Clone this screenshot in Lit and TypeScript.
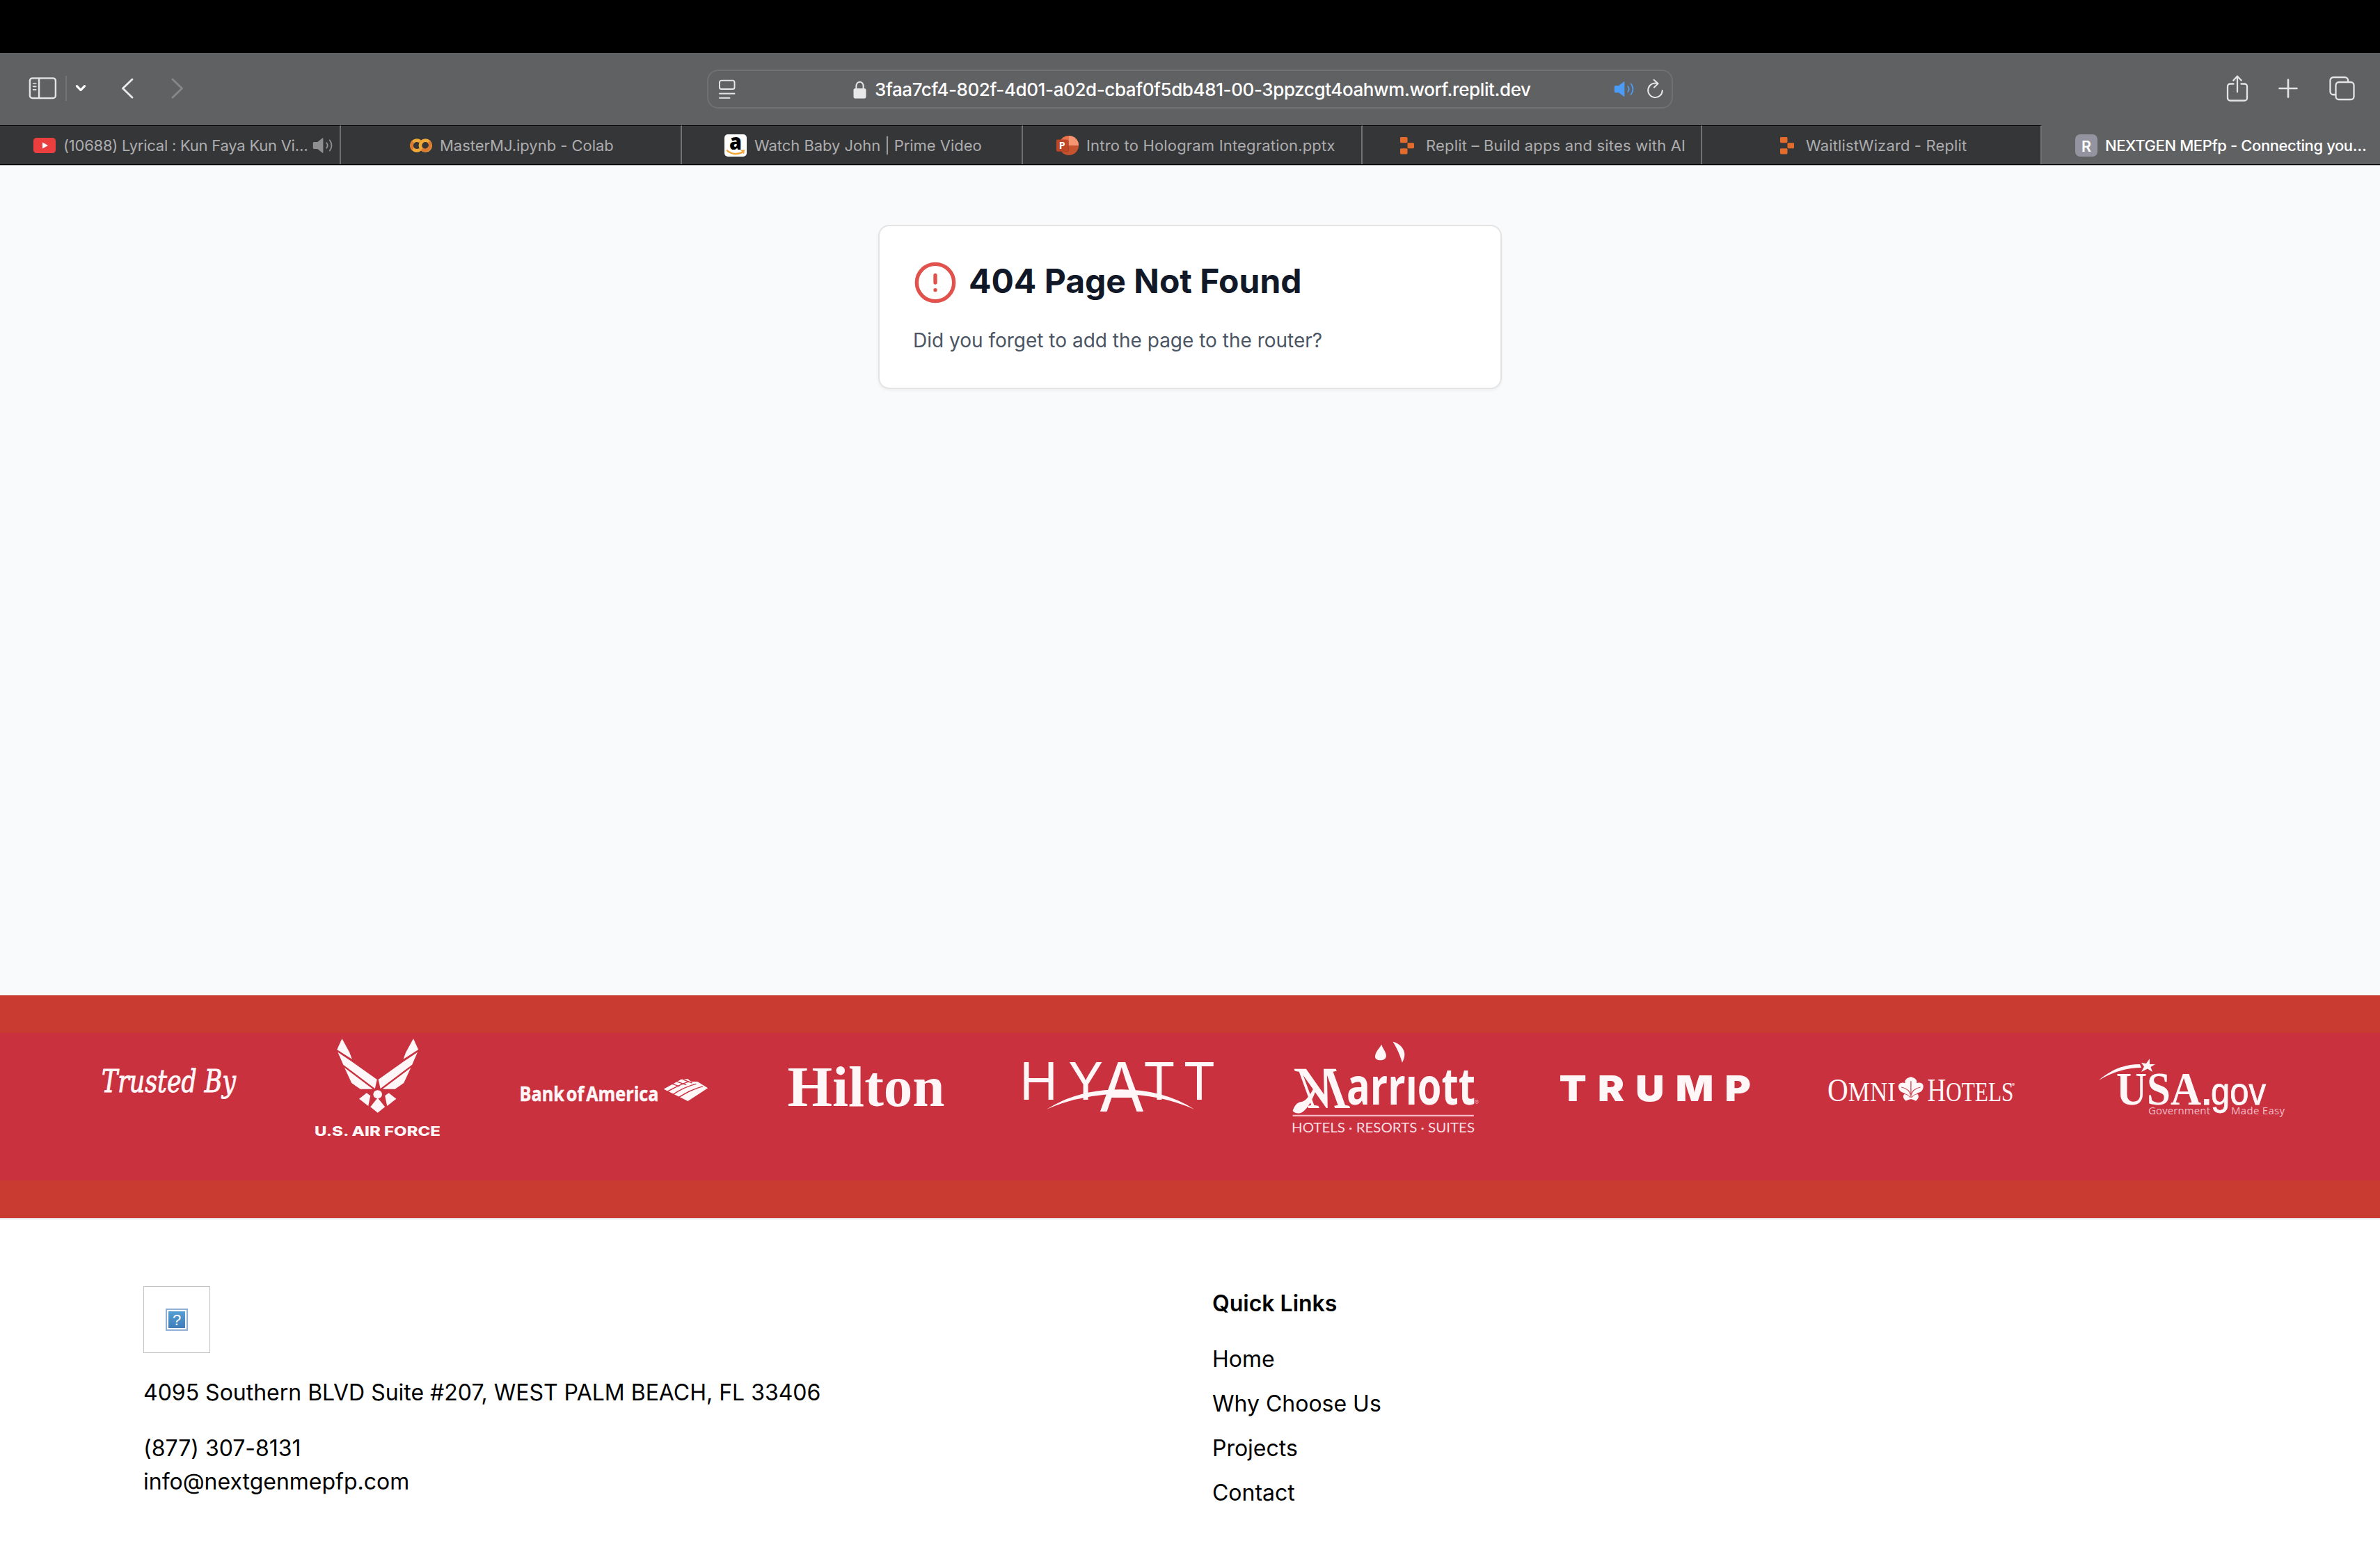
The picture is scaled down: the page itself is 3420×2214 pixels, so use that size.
import { LitElement, html, svg, css } from "lit";
import { customElement } from "lit/decorators.js";

const LOGO_FILL = "#fff6f8";

const sidebarIcon = html`<svg width="40" height="32" viewBox="0 0 40 32" fill="none" stroke="#e4e4e5" stroke-width="2.4">
  <rect x="1.9" y="1.4" width="37" height="28.6" rx="3.6" /><path d="M15.1 1.4v28.6" />
  <path d="M6.700 9h4M6.700 13.300h4M6.700 17.800h4" stroke-width="1.7" stroke-linecap="round" /></svg>`;
const speaker = (c: string) => html`<svg width="30" height="24" viewBox="0 0 30 24" fill="none" stroke=${c} stroke-width="1.9" stroke-linecap="round">
  <path d="M2.6 7h4.6l7-5.4c.6-.5 1.2-.2 1.2.5v19.8c0 .7-.6 1-1.2.5l-7-5.4H2.6C1.4 17 .8 16.4.8 15.200V8.800C.8 7.600 1.400 7 2.600 7Z" fill=${c} stroke="none" />
  <path d="M20.300 8.200a6.500 6.500 0 0 1 0 7.600M24.800 4.500a12 12 0 0 1 0 15" /></svg>`;

const icons: Record<string, unknown> = {
  youtube: html`<svg width="32" height="32" viewBox="0 0 32 32"><rect y="5" width="32" height="22" rx="4.500" fill="#ea3f3e" /><path d="M13 11.500v9l8-4.500Z" fill="#fff" /></svg>`,
  colab: html`<svg width="32" height="32" viewBox="0 0 32 32" fill="none" stroke-width="4.700">
    <path d="M14.600 10.300A7.400 7.400 0 1 0 14.600 21.700" stroke="#f0a938" />
    <path d="M4.600 10.800A7.400 7.400 0 0 0 4.600 21.200" stroke="#dc7a31" />
    <circle cx="22.300" cy="16" r="7.400" stroke="#f0a938" />
    <path d="M27.500 10.800A7.400 7.400 0 0 1 17.100 21.200" stroke="#dc7a31" /></svg>`,
  amazon: html`<svg width="32" height="32" viewBox="0 0 32 32"><rect width="32" height="32" rx="5" fill="#fff" />
    <text x="16" y="21.500" text-anchor="middle" font-family="Open Sans, sans-serif" font-weight="800" font-size="32" textLength="18" lengthAdjust="spacingAndGlyphs">a</text>
    <path d="M4 23.300c6.500 5.600 16 6.200 22.500 1.700" fill="none" stroke="#f3a63b" stroke-width="2.400" stroke-linecap="round" />
    <path d="M23.500 23.300l4.800-.3-.9 4.600" fill="none" stroke="#f3a63b" stroke-width="1.600" /></svg>`,
  powerpoint: html`<svg width="32" height="32" viewBox="0 0 32 32"><circle cx="18" cy="16" r="14" fill="#c6532f" />
    <path d="M4 16A14 14 0 0 1 18 2v14Z" fill="#e8744f" /><path d="M18 2a14 14 0 0 1 14 14H18Z" fill="#f59571" />
    <rect x="1" y="8.500" width="17" height="17" rx="1.500" fill="#8f351c" opacity=".45" />
    <rect y="7.500" width="16.500" height="17" rx="1.500" fill="#bd4727" />
    <text x="8.200" y="20.700" text-anchor="middle" fill="#fff" font-family="Open Sans, sans-serif" font-weight="700" font-size="14">P</text></svg>`,
  replit: html`<svg width="32" height="32" viewBox="0 0 32 32" fill="#e36c2d"><rect x="6" y="4" width="10.500" height="8.200" rx="1.400" />
    <rect x="16.500" y="12.200" width="9.500" height="8" rx="1.400" /><rect x="6" y="20.200" width="10.500" height="8.200" rx="1.400" /></svg>`,
  letter: html`<svg width="32" height="32" viewBox="0 0 32 32"><rect width="32" height="32" rx="7" fill="#9494a0" />
    <text x="16" y="24.500" text-anchor="middle" fill="#fff" font-family="Inter, sans-serif" font-weight="600" font-size="21.500">R</text></svg>`,
};

interface Tab { icon: string; label: string; inset: number; width: number; spacing: number; audio?: boolean; active?: boolean }
const tabs: Tab[] = [
  { icon: "youtube", label: "(10688) Lyrical : Kun Faya Kun Vi…", inset: 48, width: 490, spacing: -0.24, audio: true },
  { icon: "colab", label: "MasterMJ.ipynb - Colab", inset: 99, width: 490, spacing: -0.03 },
  { icon: "amazon", label: "Watch Baby John | Prime Video", inset: 61, width: 490, spacing: -0.04 },
  { icon: "powerpoint", label: "Intro to Hologram Integration.pptx", inset: 48, width: 488, spacing: 0.18 },
  { icon: "replit", label: "Replit – Build apps and sites with AI", inset: 48, width: 488, spacing: 0.18 },
  { icon: "replit", label: "WaitlistWizard - Replit", inset: 106, width: 488, spacing: 0.14 },
  { icon: "letter", label: "NEXTGEN MEPfp - Connecting you…", inset: 48, width: 486, spacing: -0.4, active: true },
];

const feathers = svg`
  <path d="M653 217 641 264 677 305 671 276Z" />
  <path d="M643 275 680 320 737 393 736 400 732 432 656 329Z" />
  <path d="M659 342 727 434H697L676 408Z" />
  <path d="M712 451 694 476 716 507 721 463Z" />`;

const logos = [
  { x: 0, w: 400, art: svg`<text x="146" y="1568.500" font-family="DejaVu Serif Condensed, DejaVu Serif, serif" font-style="italic" font-size="44" stroke=${LOGO_FILL} stroke-width=".9" textLength="193" lengthAdjust="spacingAndGlyphs">Trusted By</text>` },
  { x: 400, w: 300, art: svg`<g transform="translate(100 1420) scale(.59949 .33333)">${feathers}<g transform="translate(1477 0) scale(-1 1)">${feathers}</g>
      <ellipse cx="738.500" cy="457" rx="10.500" ry="18" /><path d="M738.500 472 721 511 738.500 536 756 511Z" /></g>
      <text x="452" y="1631.500" font-family="Inter, sans-serif" font-weight="800" font-size="18.500" textLength="181" lengthAdjust="spacingAndGlyphs">U.S. AIR FORCE</text>` },
  { x: 700, w: 380, art: svg`<text x="746.500" y="1582.300" font-family="Open Sans, sans-serif" font-weight="700" font-size="28.500" word-spacing="-4" stroke=${LOGO_FILL} stroke-width=".5" textLength="200" lengthAdjust="spacingAndGlyphs">Bank of America</text>
      <g transform="translate(100 1420) scale(.59949 .33333)"><path d="M1424 434 1466 392 1482 391 1490 402 1505 402 1530 430 1482 486 1466 472Z" />
      <path d="M1432 446C1450 428 1462 415 1484 402M1446 458C1464 436 1480 422 1502 412M1458 472C1480 448 1494 434 1518 422M1444 412 1462 422M1456 402 1478 416M1470 392 1492 408" fill="none" stroke="#c9313f" stroke-width="3.500" /></g>` },
  { x: 1080, w: 340, art: svg`<text x="1131.500" y="1588.700" font-family="Liberation Serif, serif" font-weight="700" font-size="82" textLength="226" lengthAdjust="spacingAndGlyphs">Hilton</text>` },
  { x: 1420, w: 380, art: svg`<text y="1580" font-family="Inter, sans-serif" font-weight="400" font-size="74"><tspan x="1465">H</tspan><tspan x="1535">Y</tspan><tspan x="1578.500" y="1597" font-size="97">A</tspan><tspan x="1642" y="1580">T</tspan><tspan x="1699.500">T</tspan></text>
      <path transform="translate(1040 1420) scale(.53571 .33333)" d="M866 521Q950 436 1065 436T1262 521Q1170 457 1065 456T866 521Z" />` },
  { x: 1800, w: 380, art: svg`<g transform="translate(1800 1420) scale(.5102 .33333)"><path d="M363 242C355 262 345 275 345 295 345 306 352 310 360 310 370 310 377 302 376 288 375 272 366 258 363 242Z" /><path d="M395 230C415 236 428 262 428 285 428 300 424 312 421 320 418 300 408 260 395 230Z" />
      <path d="M113 528C118 505 124 494 135 490 148 488 158 470 172 430L178 440C166 490 150 530 134 538 124 540 116 536 113 528Z" /><path d="M113 548.500H623" stroke="#f5bcc5" stroke-width="7" /></g>
      <text transform="translate(1879 1592) skewX(20)" font-family="Liberation Serif, serif" font-weight="700" font-size="86" textLength="63" lengthAdjust="spacingAndGlyphs">M</text>
      <text x="1935" y="1586.700" font-family="Open Sans, sans-serif" font-weight="700" font-size="73" textLength="185" lengthAdjust="spacingAndGlyphs">arrıott</text>
      <text x="2119" y="1587" font-family="Inter, sans-serif" font-size="9" fill="#eca3ae">®</text>
      <text x="1856" y="1627.200" font-family="Lato, sans-serif" font-size="19.500" fill="#fbdde2" textLength="263" lengthAdjust="spacingAndGlyphs">HOTELS · RESORTS · SUITES</text>` },
  { x: 2180, w: 400, art: svg`<text transform="translate(2240.500 1582.300) scale(1.12 1)" font-family="Inter, sans-serif" font-weight="900" font-size="51" textLength="246">TRUMP</text>` },
  { x: 2580, w: 380, art: svg`<text x="2626" y="1581.700" font-family="Liberation Serif, serif" font-size="46" textLength="98" lengthAdjust="spacingAndGlyphs">O<tspan font-size="39">MNI</tspan></text>
      <text x="2769.500" y="1581.700" font-family="Liberation Serif, serif" font-size="46" textLength="124" lengthAdjust="spacingAndGlyphs">H<tspan font-size="39">OTELS</tspan></text>
      <text x="2891" y="1561" font-family="Inter, sans-serif" font-size="6">®</text>
      <g transform="translate(2560 1420) scale(.54847 .33333)"><path d="M339 381C352 388 356 396 354 408 366 402 374 412 371 430 369 444 362 450 354 452 362 462 360 474 352 485 346 482 344 478 339 478 334 478 332 482 326 485 318 474 316 462 324 452 316 450 309 444 307 430 304 412 312 402 324 408 322 396 326 388 339 381Z" />
      <path d="M339 400V470M339 462C336 440 326 430 314 426M339 462C342 440 352 430 364 426M337 470C332 458 326 456 320 454M341 470C346 458 352 456 358 454" fill="none" stroke="#d0505d" stroke-width="2.500" /></g>` },
  { x: 2960, w: 460, art: svg`<text x="3041" y="1586.700" font-family="Liberation Serif, serif" font-weight="700" font-size="67" textLength="122" lengthAdjust="spacingAndGlyphs">USA</text>
      <text x="3161" y="1586.700" font-family="Liberation Sans, sans-serif" font-size="56" stroke=${LOGO_FILL} stroke-width=".8"><tspan font-size="70">.</tspan><tspan x="3177" textLength="79" lengthAdjust="spacingAndGlyphs">gov</tspan></text>
      <text x="3087" y="1601" font-family="Open Sans, sans-serif" font-size="15" fill="#f3bcc5" textLength="89">Government</text>
      <text x="3206" y="1601" font-family="Open Sans, sans-serif" font-size="15" fill="#f3bcc5" textLength="77">Made Easy</text>
      <path d="M3016 1552C3034 1537 3052 1529 3075 1529L3077 1534C3056 1534 3036 1540 3016 1552Z" />
      <path d="M3089 1521 3089 1529 3097 1529 3090.500 1533 3093 1540 3086 1535.500 3077 1540 3081 1532.500 3077 1527 3084 1528Z" />` },
];

@customElement("app-root")
export class AppRoot extends LitElement {
  static styles = css`
    :host { display: block; width: 3420px; height: 2214px; overflow: hidden; font-family: Inter, "Liberation Sans", sans-serif; background: #fff; }
    * { box-sizing: border-box; }
    svg { display: block; flex: none; overflow: visible; }
    h1, h2, p, ul { margin: 0; padding: 0; font: inherit; list-style: none; }
    .notch { height: 76px; background: #000; }
    .toolbar { height: 104px; background: #606163; display: grid; grid-template-columns: 1016px 1388px 1016px; }
    .left { display: flex; align-items: center; padding: 0 0 1px 41px; height: 103px; }
    .rule { width: 2px; height: 36px; background: #737476; margin: 0 12px 0 13px; }
    .back { margin-left: 50px; }
    .fwd { margin-left: 54px; }
    .address { margin-top: 24px; height: 56px; border: 2px solid #707173; border-radius: 16px; display: flex; align-items: center; padding: 0 11px 0 14px; }
    .lock { margin-left: 168px; }
    .url { margin-left: 12px; padding-top: 2px; width: 1065px; color: #fff; font-size: 26px; font-weight: 500; letter-spacing: -0.4px; line-height: 32px; white-space: nowrap; }
    .reload { margin-left: 16px; }
    .right { display: flex; justify-content: flex-end; align-items: center; height: 102px; padding-right: 36px; }
    .plus { margin: 0 44px 0 43px; }
    .tabs { display: flex; height: 58px; background: linear-gradient(#b5b6b8, #b5b6b8) bottom / 100% 1px no-repeat #000; padding: 0 0 2px; }
    .tab { display: flex; align-items: center; gap: 11px; background: #353638; border-top: 1px solid #000; border-right: 2px solid #707173; color: #acacae; font-size: 22px; line-height: 28px; white-space: nowrap; }
    .tab.active { background: #606163; border-top-color: #606163; border-right: 0; color: #fff; font-weight: 500; }
    .tab .audio { margin-left: -4px; }
    .page { height: 1192px; background: #f9fafc; padding-top: 85px; }
    .card { width: 896px; height: 236px; margin: 0 auto; padding: 48px; background: #fff; border: 2px solid #e5e4e3; border-radius: 16px; box-shadow: 0 2px 4px rgba(0, 0, 0, .05); }
    .heading { display: flex; gap: 16px; height: 64px; }
    .alert { margin-top: 1px; }
    .title { font-size: 48px; font-weight: 700; line-height: 62px; color: #111827; white-space: nowrap; }
    .hint { margin-top: 32px; font-size: 28px; line-height: 40px; color: #4b5563; }
    .trusted { height: 320px; padding: 54px 0; background: #c93a30; }
    .strip { display: flex; height: 212px; background: #c9313f; }
    .footer { height: 464px; padding: 96px 206px 0; border-top: 2px solid #e5e5e5; display: grid; grid-template-columns: 1fr 1fr; gap: 64px; font-size: 32px; line-height: 48px; letter-spacing: -0.01px; color: #000; }
    .missing { width: 96px; height: 96px; border: 1px solid #c0c0c0; display: grid; place-items: center; }
    .para { margin-top: 32px; }
    .missing + .para { margin-top: 33px; }
    .links { display: flex; flex-direction: column; gap: 16px; margin-top: 32px; }
    .sub { font-weight: 600; padding-top: 1px; }
  `;

  render() {
    return html`
      <div class="notch"></div>
      <header class="toolbar">
        <div class="left">
          ${sidebarIcon}<span class="rule"></span>
          <svg width="16" height="12" viewBox="0 0 16 12" fill="none" stroke="#fff" stroke-width="3.200" stroke-linecap="round" stroke-linejoin="round"><path d="M2.400 2.600 8 8.400l5.600-5.800" /></svg>
          <svg class="back" width="18" height="32" viewBox="0 0 18 32" fill="none" stroke="#e9e9ea" stroke-width="2.900" stroke-linecap="round" stroke-linejoin="round"><path d="M16 3 2.500 16 16 29" /></svg>
          <svg class="fwd" width="18" height="32" viewBox="0 0 18 32" fill="none" stroke="#868789" stroke-width="2.900" stroke-linecap="round" stroke-linejoin="round"><path d="M2 3l13.500 13L2 29" /></svg>
        </div>
        <div class="address">
          <svg width="26" height="28" viewBox="0 0 26 28" fill="none" stroke="#e8e8e9" stroke-width="1.900" stroke-linecap="round"><rect x="2" y="1.600" width="21.500" height="12.400" rx="2.600" /><path d="M2 20.500h21.500M2 26.800h14.500" /></svg>
          <svg class="lock" width="19" height="26" viewBox="0 -1 19 26"><rect x=".5" y="11" width="18" height="14.400" rx="2.600" fill="#e8e8e9" /><path d="M4.400 12V7.400a5.100 5.600 0 0 1 10.200 0V12" fill="none" stroke="#e8e8e9" stroke-width="2" /></svg>
          <span class="url">3faa7cf4-802f-4d01-a02d-cbaf0f5db481-00-3ppzcgt4oahwm.worf.replit.dev</span>
          ${speaker("#4c9bf7")}
          <svg class="reload" width="26" height="30" viewBox="0 0 26 30" fill="none" stroke="#e8e8e9" stroke-width="2" stroke-linecap="round" stroke-linejoin="round"><path d="M16.500 6.900A10.300 10.300 0 1 0 23.800 17M11.600 1.800l6 5.300-5.600 5.400" /></svg>
        </div>
        <div class="right">
          <svg width="32" height="40" viewBox="0 0 32 40" fill="none" stroke="#e4e4e5" stroke-width="2.300" stroke-linecap="round" stroke-linejoin="round"><path d="M10.500 13.500H5.500a3.500 3.500 0 0 0-3.500 3.500v17a3.500 3.500 0 0 0 3.500 3.500h21a3.500 3.500 0 0 0 3.500-3.500V17a3.500 3.500 0 0 0-3.500-3.500h-5M16 25V3M10.300 8.500 16 2.500l5.700 6" /></svg>
          <svg class="plus" width="28" height="28" viewBox="0 0 28 28" fill="none" stroke="#e4e4e5" stroke-width="2.600" stroke-linecap="round"><path d="M14 1.500v25M1.500 14h25" /></svg>
          <svg width="38" height="36" viewBox="0 0 38 36" fill="none" stroke="#e4e4e5" stroke-width="2.300"><rect x="10.500" y="9" width="26" height="25" rx="4.500" /><path d="M10.500 27H7a4.500 4.500 0 0 1-4.500-4.500V6.500A4.500 4.500 0 0 1 7 2h16.500A4.500 4.500 0 0 1 28 6.500V9" /></svg>
        </div>
      </header>
      <nav class="tabs">
        ${tabs.map((t) => html`<div class="tab ${t.active ? "active" : ""}" style="width:${t.width}px;padding-left:${t.inset}px">
          ${icons[t.icon]}<span style="letter-spacing:${t.spacing}px">${t.label}</span>
          ${t.audio ? html`<span class="audio">${speaker("#8f8f91")}</span>` : ""}</div>`)}
      </nav>
      <main class="page">
        <section class="card">
          <div class="heading">
            <svg class="alert" width="64" height="64" viewBox="0 0 24 24" fill="none" stroke="#e0524b" stroke-width="2" stroke-linecap="round" stroke-linejoin="round"><circle cx="12" cy="12" r="10" /><path d="M12 8v4M12 16h.01" /></svg>
            <h1 class="title">404 Page Not Found</h1>
          </div>
          <p class="hint">Did you forget to add the page to the router?</p>
        </section>
      </main>
      <section class="trusted"><div class="strip">
        ${logos.map((l) => html`<svg width=${l.w} height="212" viewBox="${l.x} 1484 ${l.w} 212" fill=${LOGO_FILL}>${l.art}</svg>`)}
      </div></section>
      <footer class="footer">
        <div>
          <div class="missing"><svg width="32" height="32" viewBox="0 0 32 32"><defs><linearGradient id="q" x2="0" y2="1"><stop stop-color="#549fd3" /><stop offset="1" stop-color="#3f7dba" /></linearGradient></defs>
            <rect x="1" y="1" width="30" height="30" fill="#fff" stroke="#8fafd3" stroke-width="2" /><rect x="4" y="4" width="24" height="24" fill="url(#q)" />
            <text x="16" y="24" text-anchor="middle" fill="#fff" font-family="Liberation Sans, sans-serif" font-size="22">?</text></svg></div>
          <p class="para">4095 Southern BLVD Suite #207, WEST PALM BEACH, FL 33406</p>
          <p class="para">(877) 307-8131<br />info@nextgenmepfp.com</p>
        </div>
        <div>
          <h2 class="sub">Quick Links</h2>
          <ul class="links"><li>Home</li><li>Why Choose Us</li><li>Projects</li><li>Contact</li></ul>
        </div>
      </footer>`;
  }
}
